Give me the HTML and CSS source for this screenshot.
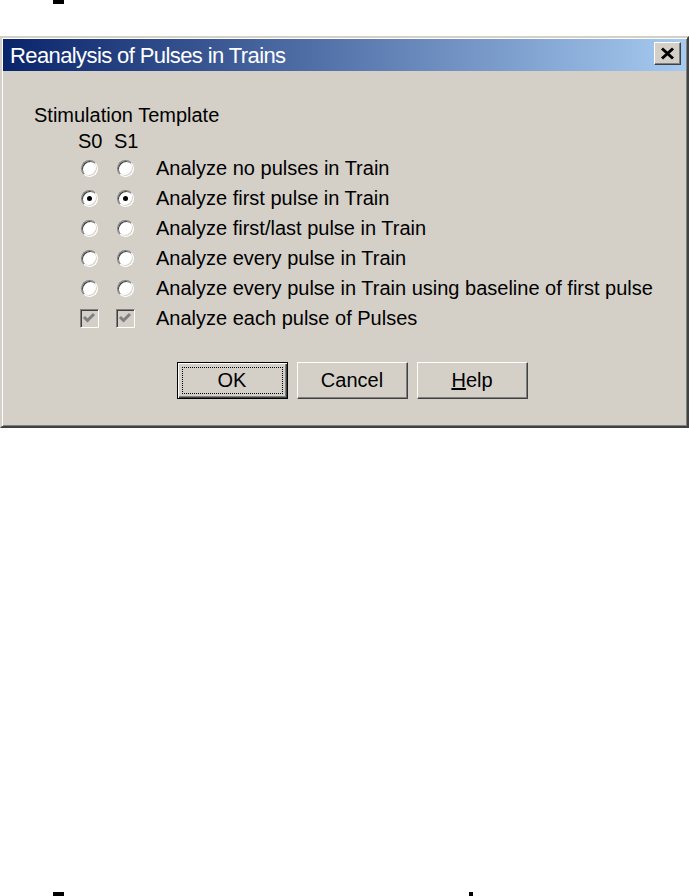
FILE: index.html
```html
<!DOCTYPE html>
<html lang="en">
<head>
  <meta charset="UTF-8" />
  <title>Reanalysis of Pulses in Trains</title>
  <link rel="stylesheet" href="styles.css">
</head>
<body>
  <div class="mark mark-top"></div>

  <div class="window">
    <div class="titlebar">
      <span class="title">Reanalysis of Pulses in Trains</span>
      <button class="close-btn" aria-label="Close">
        <svg width="15" height="13" viewBox="0 0 15 13">
          <path d="M2 1.5 L13 11.5 M13 1.5 L2 11.5" stroke="#000" stroke-width="3" fill="none"/>
        </svg>
      </button>
    </div>

    <div class="content">
      <div class="group-label">Stimulation Template</div>
      <div class="row head-row">
        <span class="col-label">S0</span>
        <span class="col-label">S1</span>
      </div>

      <div class="row">
        <span class="radio"></span><span class="radio"></span>
        <span class="text">Analyze no pulses in Train</span>
      </div>
      <div class="row">
        <span class="radio checked"></span><span class="radio checked"></span>
        <span class="text">Analyze first pulse in Train</span>
      </div>
      <div class="row">
        <span class="radio"></span><span class="radio"></span>
        <span class="text">Analyze first/last pulse in Train</span>
      </div>
      <div class="row">
        <span class="radio"></span><span class="radio"></span>
        <span class="text">Analyze every pulse in Train</span>
      </div>
      <div class="row">
        <span class="radio"></span><span class="radio"></span>
        <span class="text">Analyze every pulse in Train using baseline of first pulse</span>
      </div>
      <div class="row">
        <span class="check">
          <svg width="14" height="14" viewBox="0 0 14 14"><path d="M2 6 L5.5 9.5 L12 3" stroke="#808080" stroke-width="3" fill="none"/></svg>
        </span>
        <span class="check">
          <svg width="14" height="14" viewBox="0 0 14 14"><path d="M2 6 L5.5 9.5 L12 3" stroke="#808080" stroke-width="3" fill="none"/></svg>
        </span>
        <span class="text">Analyze each pulse of Pulses</span>
      </div>

      <div class="buttons">
        <button class="btn default"><span class="focus">OK</span></button>
        <button class="btn">Cancel</button>
        <button class="btn"><u>H</u>elp</button>
      </div>
    </div>
  </div>

  <div class="mark mark-bl"></div>
  <div class="mark mark-br"></div>
</body>
</html>
```

FILE: styles.css
```css
* {
  margin: 0;
  padding: 0;
  box-sizing: border-box;
}
body {
  font-family: 'Liberation Sans', Arial, sans-serif;
  background: #fff;
  width: 689px;
  height: 896px;
  position: relative;
  overflow: hidden;
}
.mark {
  position: absolute;
  background: #000;
  height: 4px;
}
.mark-top { left: 53px; top: 0; width: 11px; }
.mark-bl { left: 53px; bottom: 0; width: 11px; }
.mark-br { left: 469px; bottom: 0; width: 4px; }

.window {
  margin-top: 36px;
  width: 689px;
  background: #d4d0c8;
  border: 2px solid;
  border-color: #d4d0c8 #404040 #404040 #d4d0c8;
  box-shadow: inset 1px 1px #fff, inset -1px -1px #808080;
  padding: 1px;
}
.titlebar {
  height: 32px;
  background: linear-gradient(to right, #0a246a, #a6caf0);
  display: flex;
  align-items: flex-start;
  justify-content: space-between;
  padding: 3px 5px 0 7px;
}
.title {
  color: #fff;
  font-size: 22px;
  letter-spacing: -0.6px;
  line-height: 27px;
}
.close-btn {
  width: 27px;
  height: 23px;
  background: #d4d0c8;
  border: 1px solid;
  border-color: #fff #404040 #404040 #fff;
  box-shadow: inset -1px -1px #808080;
  display: flex;
  align-items: center;
  justify-content: center;
  padding-bottom: 1px;
}
.content {
  padding: 30px 0 26px 0;
  font-size: 20px;
  color: #000;
}
.group-label {
  padding-left: 31px;
  line-height: 28px;
  height: 28px;
}
.row {
  display: grid;
  grid-template-columns: 18px 18px 1fr;
  column-gap: 18px;
  align-items: center;
  justify-items: center;
  padding-left: 77px;
  height: 30px;
}
.head-row {
  height: 24px;
}
.col-label {
  line-height: 24px;
  justify-self: start;
  margin-left: -2px;
}
.text {
  justify-self: start;
  margin-left: 4px;
  white-space: nowrap;
  line-height: 30px;
}
.radio {
  width: 17px;
  height: 17px;
  border-radius: 50%;
  background: #fff;
  border: 1px solid;
  border-color: #808080 #fff #fff #808080;
  box-shadow: inset 1px 1px #404040, inset -1px -1px #d4d0c8;
  display: flex;
  align-items: center;
  justify-content: center;
}
.radio.checked::after {
  content: "";
  width: 5px;
  height: 5px;
  border-radius: 50%;
  background: #000;
}
.check {
  width: 19px;
  height: 19px;
  flex-shrink: 0;
  background: #d4d0c8;
  border: 1px solid;
  border-color: #808080 #fff #fff #808080;
  box-shadow: inset 1px 1px #404040, inset -1px -1px #d4d0c8;
  display: flex;
  align-items: center;
  justify-content: center;
}
.buttons {
  display: flex;
  justify-content: center;
  gap: 9px;
  margin-top: 29px;
  padding-left: 15px;
}
.btn {
  width: 111px;
  height: 37px;
  font-family: 'Liberation Sans', Arial, sans-serif;
  font-size: 20px;
  color: #000;
  background: #d4d0c8;
  border: 1px solid;
  border-color: #fff #404040 #404040 #fff;
  box-shadow: inset -1px -1px #808080, inset 1px 1px #d4d0c8;
  display: flex;
  align-items: center;
  justify-content: center;
}
.btn.default {
  border: 1px solid #000;
  box-shadow: inset 1px 1px #fff, inset -1px -1px #404040, inset -2px -2px #808080;
  padding: 4px;
}
.focus {
  flex: 1;
  height: 100%;
  border: 1px dotted #000;
  display: flex;
  align-items: center;
  justify-content: center;
}
```
